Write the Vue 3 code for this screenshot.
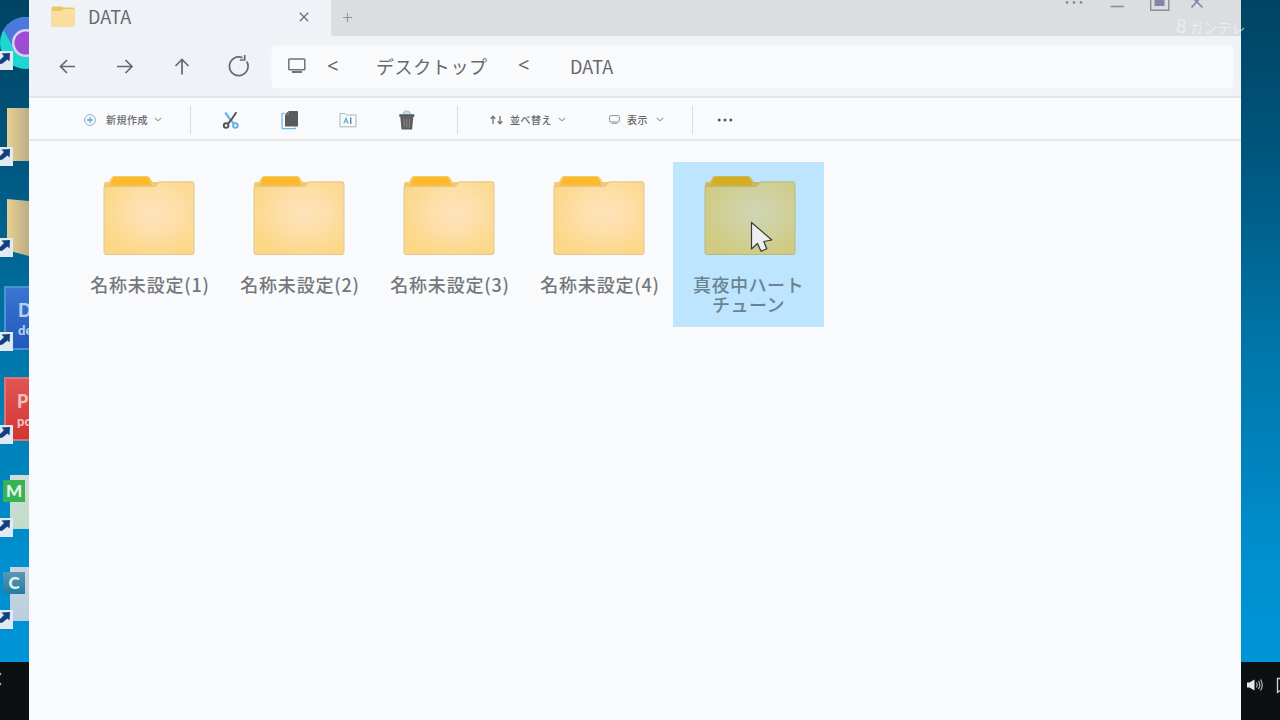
<template>
  <div class="desktop">
    <!-- desktop shortcuts, partly hidden behind the window -->
    <div class="shortcut chrome">
      <svg width="52" height="52" viewBox="0 0 52 52">
        <circle cx="26" cy="26" r="26" fill="#1fd6d3" />
        <path d="M3.500 13 A26 26 0 0 1 48.500 13 L30 26 L13 30 Z" fill="#4b78dc" />
        <circle cx="26" cy="26" r="14" fill="#dcd3f2" />
        <circle cx="26" cy="26" r="11.500" fill="#9d4cd4" />
      </svg>
    </div>
    <div class="shortcut paper first"></div>
    <div class="shortcut paper second"></div>
    <div class="shortcut app blue"><b>D</b><span>de</span></div>
    <div class="shortcut app red"><b>P</b><span>po</span></div>
    <div class="shortcut doc green"><i></i><b>M</b></div>
    <div class="shortcut doc teal"><i></i><b>C</b></div>
    <svg v-for="y in linkMarks" :key="y" class="link-mark" :style="{ top: y + 'px' }" width="13" height="19" viewBox="0 0 13 19">
      <rect width="13" height="19" fill="#dfeaf2" />
      <path d="M1.500 2.500 L10 2 L9.500 10.500 L7.500 8.500 L2.500 12.500 L0 13 V9 L4 5 Z" fill="#123f7e" />
    </svg>

    <div class="taskbar">
      <svg class="task-left" width="3" height="20" viewBox="0 0 3 20">
        <circle cx="0" cy="7" r="1.300" fill="#a5a8aa" />
        <circle cx="0" cy="17" r="1.300" fill="#a5a8aa" />
      </svg>
      <svg class="task-right" width="36" height="20" viewBox="0 0 36 20">
        <path d="M3 7.500 H5.500 L10.500 4.500 V15.500 L5.500 12.500 H3 Z" fill="#e8e8e8" />
        <path d="M12.500 7.500 Q14 10 12.500 12.500 M14.500 6 Q17 10 14.500 14 M16.500 4.500 Q20 10 16.500 15.500" fill="none" stroke="#b5b5b5" stroke-width="1.200" />
        <path d="M36 3.500 H33.500 V17.500 L36 15.500" fill="none" stroke="#d5d5d5" stroke-width="1.300" />
      </svg>
    </div>

    <div class="window">
      <div class="tab-bar">
        <div class="tab">
          <svg class="tab-folder" width="24" height="21" viewBox="0 0 24 21">
            <path d="M0.500 2 Q0.500 0.500 2 0.500 H11 L12.500 1.500 H22 Q23.500 1.500 23.500 3 V19 Q23.500 20.500 22 20.500 H2 Q0.500 20.500 0.500 19 Z" fill="#edc565" />
            <path d="M0.500 5 H10.500 L12.500 3 H23 V19 Q23 20 22 20 H2 Q0.500 20.500 0.500 19 Z" fill="#fbdd9d" />
          </svg>
          <span class="tab-title">DATA</span>
          <svg class="tab-close" width="10" height="10" viewBox="0 0 10 10">
            <path d="M0.800 0.800 L9.200 9.200 M9.200 0.800 L0.800 9.200" stroke="#6c6f73" stroke-width="1.300" />
          </svg>
        </div>
        <div class="tab-rest">
          <svg class="tab-add" width="9" height="9" viewBox="0 0 9 9">
            <path d="M4.500 0 V9 M0 4.500 H9" stroke="#929499" stroke-width="1.100" />
          </svg>
          <svg class="controls" width="142" height="12" viewBox="0 0 142 12">
            <g fill="#8b8c9a">
              <circle cx="3" cy="2.500" r="1.400" />
              <circle cx="10" cy="2.500" r="1.400" />
              <circle cx="17" cy="2.500" r="1.400" />
            </g>
            <path d="M46.500 6.500 H60" stroke="#8e8f9b" stroke-width="1.600" />
            <path d="M86.700 -2 V10.200 H104.800 V-2" fill="none" stroke="#8b8c9b" stroke-width="1.400" />
            <rect x="90.500" y="-2" width="10" height="8" fill="#8584aa" />
            <path d="M127.500 7.500 L138 -4 M138.500 7.500 L127 -4" stroke="#8786a2" stroke-width="1.700" />
          </svg>
        </div>
      </div>

      <div class="nav-bar">
        <button v-for="b in navButtons" :key="b.name" class="nav-btn" :aria-label="b.name">
          <svg width="22" height="24" viewBox="0 0 22 24" fill="none" stroke="#66696d" stroke-width="1.700">
            <path :d="b.path" />
          </svg>
        </button>
        <div class="address">
          <svg class="pc" width="18" height="16" viewBox="0 0 18 16" fill="none" stroke="#707276">
            <rect x="0.800" y="1" width="16" height="10.800" rx="0.800" stroke-width="1.500" />
            <path d="M4 14 H14" stroke-width="2" />
          </svg>
          <span class="sep one">&lt;</span>
          <span class="crumb desk">デスクトップ</span>
          <span class="sep two">&lt;</span>
          <span class="crumb">DATA</span>
        </div>
      </div>

      <div class="tool-bar">
        <div class="tool new">
          <svg width="12" height="12" viewBox="0 0 12 12" fill="none">
            <circle cx="6" cy="6" r="5.400" stroke="#8eaec0" />
            <path d="M6 3 V9 M3 6 H9" stroke="#55aede" stroke-width="1.300" />
          </svg>
          <span>新規作成</span>
          <svg class="chev" width="8" height="5" viewBox="0 0 8 5"><path d="M0.700 0.800 L4 3.800 L7.300 0.800" /></svg>
        </div>
        <i class="divider"></i>
        <div class="icons">
          <svg width="18" height="20" viewBox="0 0 18 20" fill="none">
            <path d="M3.200 2.500 L9 10.500 L12.300 14" stroke="#6cb5e0" stroke-width="2.200" />
            <path d="M14.300 2.300 L9.500 9.500 L5.800 14" stroke="#55585b" stroke-width="2" />
            <circle cx="4.100" cy="15.600" r="2.300" stroke="#505357" stroke-width="1.900" />
            <circle cx="13.400" cy="15.600" r="2.300" stroke="#61b1e2" stroke-width="1.900" />
          </svg>
          <svg width="18" height="20" viewBox="0 0 18 20">
            <path d="M3.500 3.300 H1.700 Q1 3.300 1 4 V18 Q1 18.700 1.800 18.700 H14.500 V17.500" fill="none" stroke="#70b6df" stroke-width="1.200" />
            <path d="M7.500 1 H16 Q17 1 17 2 V16.500 H4 V4.500 Z" fill="#5a5b5e" />
            <path d="M7.500 1 V4.500 H4" fill="none" stroke="#8d9093" stroke-width="0.700" />
          </svg>
          <svg width="18" height="20" viewBox="0 0 18 20" fill="none">
            <path d="M1 3.500 H6 L7.500 5 H17 V16.800 H1 Z" stroke="#a9b6be" />
            <path d="M4.800 13.500 L7 8 L9.200 13.500 M5.600 11.800 H8.400" stroke="#64abd1" stroke-width="1.100" />
            <path d="M11.700 7.500 V14" stroke="#5d8094" stroke-width="1.400" />
          </svg>
          <svg width="18" height="20" viewBox="0 0 18 20">
            <path d="M5.500 4.500 Q5.500 1.300 8.800 1.300 Q12.100 1.300 12.100 4.500" fill="#c4e1f2" stroke="#9dcce8" stroke-width="1.600" />
            <path d="M1.300 4.300 H16.300 V6.800 H1.300 Z" fill="#505255" />
            <path d="M2.300 6.500 H15.300 L14.100 19.500 H3.500 Z" fill="#5b5c5f" />
            <path d="M5.900 8.500 L6.400 17.500 M8.800 8.500 V17.500 M11.700 8.500 L11.200 17.500" stroke="#909194" stroke-width="0.900" />
          </svg>
        </div>
        <i class="divider"></i>
        <div class="tool sort">
          <svg width="15" height="10" viewBox="0 0 15 10" fill="none" stroke="#707276" stroke-width="1.300">
            <path d="M4 9 V1.500 M1.700 3.700 L4 1.300 L6.300 3.700 M11 1 V8.500 M8.700 6.300 L11 8.700 L13.300 6.300" />
          </svg>
          <span>並べ替え</span>
          <svg class="chev" width="8" height="5" viewBox="0 0 8 5"><path d="M0.700 0.800 L4 3.800 L7.300 0.800" /></svg>
        </div>
        <div class="tool view">
          <svg width="11" height="9" viewBox="0 0 11 9" fill="none" stroke="#8f9296">
            <rect x="0.600" y="0.600" width="9.800" height="6.300" rx="1" />
            <path d="M2.500 8.300 H8.500" />
          </svg>
          <span>表示</span>
          <svg class="chev" width="8" height="5" viewBox="0 0 8 5"><path d="M0.700 0.800 L4 3.800 L7.300 0.800" /></svg>
        </div>
        <i class="divider"></i>
        <svg class="more" width="16" height="4" viewBox="0 0 16 4" fill="#55575a">
          <circle cx="2.200" cy="2" r="1.500" />
          <circle cx="8" cy="2" r="1.500" />
          <circle cx="13.800" cy="2" r="1.500" />
        </svg>
      </div>

      <div class="files">
        <div v-for="f in folders" :key="f.id" class="file" :class="{ selected: f.selected }">
          <svg width="92" height="82" viewBox="0 0 92 82">
            <defs>
              <radialGradient :id="'body' + f.id" cx="0.56" cy="0.42" r="0.62">
                <stop offset="0" :stop-color="f.selected ? '#cfd6b4' : '#fde3bb'" />
                <stop offset="0.450" :stop-color="f.selected ? '#cfd1a0' : '#fddfa8'" />
                <stop offset="1" :stop-color="f.selected ? '#d0cb80' : '#fcd786'" />
              </radialGradient>
            </defs>
            <path d="M1 12 V9 Q1 7 3 7 H6 L8.500 2.500 Q9.300 1 11 1 H44 Q46 1 46.800 2.500 L49.500 7 H56 L53 12 Z" :fill="f.selected ? '#d0b856' : '#f5ca6c'" />
            <path d="M7 10.500 L10 3 Q10.500 2 12 2 H43 Q45 2 45.500 3.500 L48.500 10.500 Z" :fill="f.selected ? '#d3ad24' : '#fcb92b'" />
            <path
              d="M1 11.500 H51 Q53 11.500 54 9.500 Q55.200 6.800 57 6.800 H89 Q91 6.800 91 9 V77.500 Q91 79.500 89 79.500 H3 Q1 79.500 1 77.500 Z"
              :fill="'url(#body' + f.id + ')'"
              :stroke="f.selected ? '#b4b98a' : '#dfc694'"
              stroke-width="1"
            />
          </svg>
          <p>{{ f.name }}</p>
        </div>
      </div>
    </div>

    <svg class="cursor" width="24" height="32" viewBox="0 0 24 32">
      <path d="M1.500 1.500 V28 L7.500 22.500 L11 30.300 L16.800 27.800 L13.800 20.500 L21.800 19 Z" fill="#eceef0" stroke="#37393b" stroke-width="1.200" stroke-linejoin="round" />
    </svg>
    <div class="watermark"><b>8</b>ガンテレ</div>
  </div>
</template>

<script setup>
const linkMarks = [51, 147, 238, 332, 425, 518, 610];

const navButtons = [
  { name: 'Back', path: 'M3 12.500 H18 M10 6 L3.500 12.500 L10 19' },
  { name: 'Forward', path: 'M3 12.500 H18.500 M11.500 6 L18 12.500 L11.500 19' },
  { name: 'Up', path: 'M11 20.500 V5.500 M4.500 12 L11 5.500 L17.500 12' },
  { name: 'Reload', path: 'M18.700 7.500 A9.300 9.300 0 1 1 14.500 3.800 M11.800 6 H16.700 V1' },
];

const folders = [
  { id: 1, name: '名称未設定(1)' },
  { id: 2, name: '名称未設定(2)' },
  { id: 3, name: '名称未設定(3)' },
  { id: 4, name: '名称未設定(4)' },
  { id: 5, name: '真夜中ハートチューン', selected: true },
];
</script>

<style>
body {
  margin: 0;
  overflow: hidden;
}
</style>

<style scoped>
.desktop {
  position: relative;
  width: 1280px;
  height: 720px;
  overflow: hidden;
  background: linear-gradient(180deg, #004463 0, #00557c 150px, #0076a9 350px, #008fcf 560px, #0094d8 662px);
  font-family: "Noto Sans CJK JP", "Noto Sans", sans-serif;
  color: #66686c;
}
.shortcut {
  position: absolute;
  box-sizing: border-box;
}
.chrome {
  left: 0;
  top: 17px;
}
.paper {
  left: 7px;
  width: 44px;
  height: 53px;
  background: linear-gradient(90deg, #e8cf92, #b8aa88 24px);
}
.paper.first {
  top: 108px;
}
.paper.second {
  top: 199px;
  height: 57px;
  clip-path: polygon(0 0, 100% 7%, 100% 100%, 50% 100%, 0 90%);
}
.app {
  left: 4px;
  width: 60px;
  height: 64px;
  padding: 11px 0 0 12px;
  border: 2px solid;
  color: #b9d0ee;
  font-family: Lato, sans-serif;
  display: flex;
  flex-direction: column;
}
.app b {
  font-size: 18px;
  font-weight: 900;
  line-height: 22px;
}
.app span {
  font-size: 13px;
  font-weight: 900;
  line-height: 18px;
}
.blue {
  top: 286px;
  background: linear-gradient(180deg, #3a75cf, #2159be);
  border-color: #4d91d6;
}
.red {
  top: 377px;
  background: linear-gradient(180deg, #e05553, #d43533);
  border-color: #d97776;
  color: #f0c0bf;
  padding-left: 11px;
}
.doc {
  left: 3px;
  width: 50px;
  height: 56px;
}
.doc i {
  display: block;
  height: 54px;
  margin-left: 7px;
  background: linear-gradient(180deg, #d3dcda, #c0dcc8);
}
.doc b {
  position: absolute;
  left: 0;
  top: 5px;
  width: 22px;
  height: 22px;
  line-height: 22px;
  text-align: center;
  font-family: Lato, sans-serif;
  font-size: 17px;
  font-weight: 900;
  color: #e5f3e8;
}
.green {
  top: 475px;
}
.green b {
  background: #35b355;
}
.teal {
  top: 567px;
}
.teal i {
  background: linear-gradient(180deg, #ccd5dd, #b9cfdf);
}
.teal b {
  background: linear-gradient(180deg, #5a98b8, #247c9f);
}
.link-mark {
  position: absolute;
  left: 0;
}
.taskbar {
  position: absolute;
  left: 0;
  right: 0;
  bottom: 0;
  height: 58px;
  background: #0c1013;
  display: flex;
  justify-content: space-between;
}
.task-left {
  margin-top: 5px;
}
.task-right {
  margin-top: 13px;
}

.window {
  position: absolute;
  left: 29px;
  top: 0;
  width: 1212px;
  height: 720px;
  background: #f8fafc;
  display: flex;
  flex-direction: column;
}
.tab-bar {
  display: flex;
  height: 37px;
  background: #eff3f7;
}
.tab {
  display: flex;
  align-items: center;
  box-sizing: border-box;
  width: 302px;
  height: 32px;
  padding: 0 22px;
}
.tab-title {
  margin-left: 13px;
  font-size: 18px;
  line-height: 30px;
  letter-spacing: 0.1px;
}
.tab-close {
  margin-left: auto;
  margin-top: 2px;
}
.tab-rest {
  flex: 1;
  display: flex;
  justify-content: space-between;
  height: 36px;
  padding: 0 35px 0 12px;
  background: #dcdde1;
  border-radius: 0 0 0 3px;
}
.tab-add {
  margin-top: 13px;
}
.nav-bar {
  display: flex;
  align-items: center;
  box-sizing: border-box;
  height: 61px;
  padding: 0 8px 0 10px;
  background: #eff3f7;
  border-bottom: 2px solid #e2e5e8;
}
.nav-btn {
  width: 57px;
  height: 40px;
  margin-bottom: 2px;
  padding: 0;
  border: none;
  background: none;
  display: flex;
  align-items: center;
  justify-content: center;
}
.address {
  flex: 1;
  display: flex;
  align-items: center;
  box-sizing: border-box;
  height: 42px;
  margin-left: 5px;
  padding: 0 0 2px 16px;
  border-radius: 4px;
  background: #f8fafc;
  box-shadow: 0 0 3px #f8fafc;
}
.sep {
  font-family: "Noto Sans", sans-serif;
  font-size: 20px;
  line-height: 24px;
}
.sep.one {
  margin-left: 21px;
  width: 49px;
}
.sep.two {
  width: 52px;
  margin-top: -2px;
}
.crumb {
  font-size: 18px;
  line-height: 24px;
  letter-spacing: 0.1px;
}
.crumb.desk {
  width: 142px;
  letter-spacing: 0.6px;
}
.tool-bar {
  display: flex;
  align-items: center;
  box-sizing: border-box;
  height: 43px;
  padding: 2px 0 0 55px;
  border-bottom: 2px solid #e5e7ea;
}
.tool {
  display: flex;
  align-items: center;
  font-size: 10px;
  font-weight: 500;
  letter-spacing: 0.5px;
  line-height: 16px;
}
.chev {
  fill: none;
  stroke: #94979b;
  stroke-width: 1.1;
}
.divider {
  width: 1px;
  height: 28px;
  background: #d9dce0;
}
.new {
  width: 106px;
}
.new span {
  margin: 0 6px 0 10px;
}
.icons {
  display: flex;
  gap: 40.5px;
  width: 235px;
  padding-left: 31px;
}
.sort {
  width: 120px;
  margin-left: 31px;
}
.sort span {
  margin: 0 6px 0 6px;
}
.view {
  width: 83px;
}
.view span {
  margin: 0 8px 0 7px;
}
.more {
  margin-left: 24px;
}
.files {
  display: flex;
  padding: 21px 0 0 44px;
}
.file {
  width: 150px;
  height: 165px;
  box-sizing: border-box;
  padding-top: 13px;
  display: flex;
  flex-direction: column;
  align-items: center;
}
.file svg {
  margin-left: 2px;
}
.file p {
  margin: 17px -2px 0 2px;
  width: 126px;
  text-align: center;
  font-size: 18px;
  font-weight: 500;
  line-height: 20px;
  letter-spacing: 0.8px;
  color: #75777b;
}
.file.selected {
  width: 151px;
  background: #bde5fd;
}
.file.selected p {
  width: 116px;
  margin-left: 0;
  margin-right: 0;
  letter-spacing: 0.5px;
  color: #6a8392;
}
.cursor {
  position: absolute;
  left: 750px;
  top: 221px;
}
.watermark {
  position: absolute;
  left: 1176px;
  top: 12px;
  color: rgba(245, 248, 250, 0.6);
  font-size: 14px;
  line-height: 26px;
  white-space: nowrap;
}
.watermark b {
  font-size: 19px;
  font-weight: 400;
  margin-right: 3px;
}
</style>
